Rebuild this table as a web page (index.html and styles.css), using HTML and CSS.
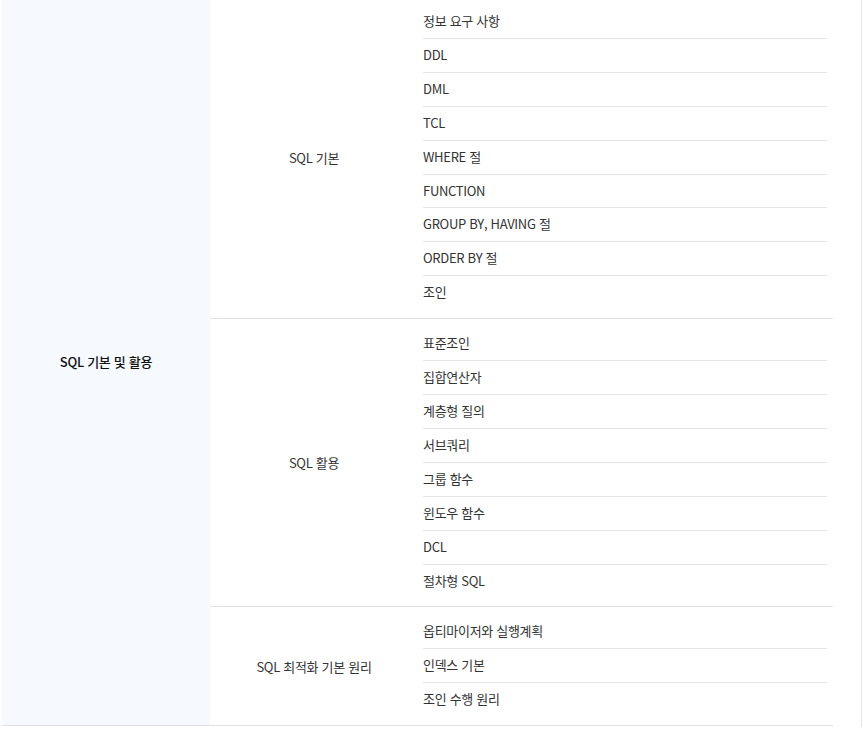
FILE: index.html
```html
<!DOCTYPE html>
<html lang="ko">
<head>
    <meta charset="UTF-8">
    <title>SQL 기본 및 활용</title>
    <link rel="stylesheet" href="styles.css">
</head>
<body>
    <div class="page">
        <div class="subject-table">
            <div class="category">SQL 기본 및 활용</div>
            <div class="groups">
                <div class="group">
                    <div class="group-name">SQL 기본</div>
                    <ul class="topics">
                        <li>정보 요구 사항</li>
                        <li>DDL</li>
                        <li>DML</li>
                        <li>TCL</li>
                        <li>WHERE 절</li>
                        <li>FUNCTION</li>
                        <li>GROUP BY, HAVING 절</li>
                        <li>ORDER BY 절</li>
                        <li>조인</li>
                    </ul>
                </div>
                <div class="group">
                    <div class="group-name">SQL 활용</div>
                    <ul class="topics">
                        <li>표준조인</li>
                        <li>집합연산자</li>
                        <li>계층형 질의</li>
                        <li>서브쿼리</li>
                        <li>그룹 함수</li>
                        <li>윈도우 함수</li>
                        <li>DCL</li>
                        <li>절차형 SQL</li>
                    </ul>
                </div>
                <div class="group">
                    <div class="group-name">SQL 최적화 기본 원리</div>
                    <ul class="topics">
                        <li>옵티마이저와 실행계획</li>
                        <li>인덱스 기본</li>
                        <li>조인 수행 원리</li>
                    </ul>
                </div>
            </div>
        </div>
    </div>
</body>
</html>
```

FILE: styles.css
```css
body {
    font-family: "Noto Sans CJK KR", "Noto Sans", sans-serif;
    margin: 0;
    background: #fff;
    color: #333;
    letter-spacing: -0.3px;
    overflow: hidden;
}
.page {
    width: 861px;
    height: 100vh;
    border-right: 1px solid #e4e4e4;
}
.subject-table {
    display: flex;
    width: 831px;
    margin: -3px 0 0 2px;
    border-bottom: 1px solid #e0e0e6;
}
.category {
    width: 208px;
    flex-shrink: 0;
    background: #f6faff;
    display: flex;
    align-items: center;
    justify-content: center;
    font-size: 13px;
    font-weight: 500;
    color: #111;
}
.groups {
    flex: 1;
}
.group {
    display: flex;
    border-bottom: 1px solid #e0e0e6;
}
.group:last-child {
    border-bottom: none;
}
.group-name {
    width: 208px;
    flex-shrink: 0;
    display: flex;
    align-items: center;
    justify-content: center;
    font-size: 13px;
}
.topics {
    flex: 1;
    list-style: none;
    margin: 0;
    padding: 8px 6px 9px 5px;
}
.topics li {
    font-size: 13px;
    line-height: 16.9px;
    padding: 8px 0;
    border-bottom: 1px solid #e3e3e8;
}
.topics li:last-child {
    border-bottom: none;
}
```
